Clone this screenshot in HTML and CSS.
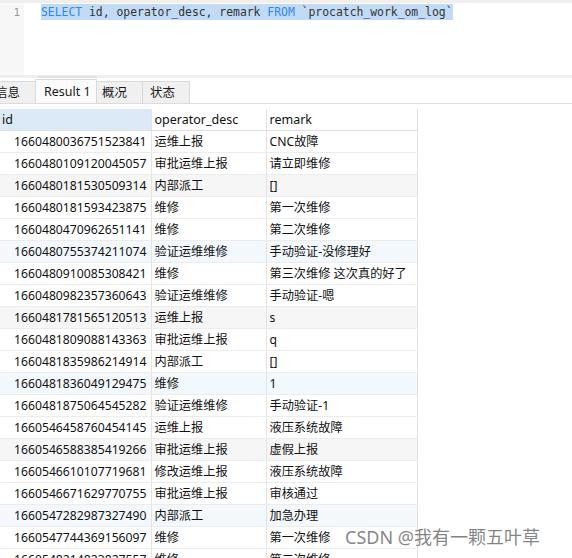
FILE: index.html
```html
<!DOCTYPE html>
<html>
<head>
<meta charset="utf-8">
<link rel="stylesheet" href="styles.css">
</head>
<body>
<div class="editor">
  <div class="gutter"><span class="ln">1</span></div>
  <div class="code"><span class="sel"><span class="kw">SELECT</span> id, operator_desc, remark <span class="kw">FROM</span> `procatch_work_om_log`</span></div>
</div>
<div class="splitter"><div class="thumb"></div></div>
<div class="tabs">
  <div class="tab first">信息</div>
  <div class="tab active">Result 1</div>
  <div class="tab t3">概况</div>
  <div class="tab t4">状态</div>
</div>
<div class="grid-wrap">
<table class="grid">
  <colgroup><col class="c1"><col class="c2"><col class="c3"></colgroup>
  <thead>
    <tr><th class="sorted">id</th><th>operator_desc</th><th>remark</th></tr>
  </thead>
  <tbody>
    <tr><td class="num">1660480036751523841</td><td>运维上报</td><td>CNC故障</td></tr>
    <tr><td class="num">1660480109120045057</td><td>审批运维上报</td><td>请立即维修</td></tr>
    <tr class="alt-g"><td class="num">1660480181530509314</td><td>内部派工</td><td>[]</td></tr>
    <tr><td class="num">1660480181593423875</td><td>维修</td><td>第一次维修</td></tr>
    <tr><td class="num">1660480470962651141</td><td>维修</td><td>第二次维修</td></tr>
    <tr class="alt-b"><td class="num">1660480755374211074</td><td>验证运维维修</td><td>手动验证-没修理好</td></tr>
    <tr><td class="num">1660480910085308421</td><td>维修</td><td>第三次维修 这次真的好了</td></tr>
    <tr><td class="num">1660480982357360643</td><td>验证运维维修</td><td>手动验证-嗯</td></tr>
    <tr class="alt-g"><td class="num">1660481781565120513</td><td>运维上报</td><td>s</td></tr>
    <tr><td class="num">1660481809088143363</td><td>审批运维上报</td><td>q</td></tr>
    <tr><td class="num">1660481835986214914</td><td>内部派工</td><td>[]</td></tr>
    <tr class="alt-b"><td class="num">1660481836049129475</td><td>维修</td><td>1</td></tr>
    <tr><td class="num">1660481875064545282</td><td>验证运维维修</td><td>手动验证-1</td></tr>
    <tr><td class="num">1660546458760454145</td><td>运维上报</td><td>液压系统故障</td></tr>
    <tr class="alt-g"><td class="num">1660546588385419266</td><td>审批运维上报</td><td>虚假上报</td></tr>
    <tr><td class="num">1660546610107719681</td><td>修改运维上报</td><td>液压系统故障</td></tr>
    <tr><td class="num">1660546671629770755</td><td>审批运维上报</td><td>审核通过</td></tr>
    <tr class="alt-b"><td class="num">1660547282987327490</td><td>内部派工</td><td>加急办理</td></tr>
    <tr><td class="num">1660547744369156097</td><td>维修</td><td>第一次维修</td></tr>
    <tr><td class="num">1660548214823827557</td><td>维修</td><td>第二次维修</td></tr>
  </tbody>
</table>
</div>
<div class="watermark">CSDN @我有一颗五叶草</div>
</body>
</html>
```
FILE: styles.css
```css
html, body {
  margin: 0;
  padding: 0;
  background: #ffffff;
  overflow: hidden;
}
body {
  width: 572px;
  height: 558px;
  position: relative;
  font-family: "Noto Sans", "Noto Sans CJK SC", sans-serif;
  font-size: 12px;
  color: #111111;
}
.editor {
  display: flex;
  height: 72px;
  border-top: 3px solid #efefef;
  background: #fff;
}
.gutter {
  width: 24px;
  background: #f7f7f7;
  display: flex;
  justify-content: flex-end;
  padding-top: 2px;
  box-sizing: border-box;
}
.ln {
  font-family: "DejaVu Sans Mono", monospace;
  font-size: 11px;
  color: #999999;
  line-height: 16px;
  padding-right: 4px;
}
.code {
  padding-left: 17px;
  padding-top: 1px;
  font-family: "DejaVu Sans Mono", "Liberation Mono", monospace;
  font-size: 11.4px;
  line-height: 16px;
  color: #333333;
  white-space: pre;
}
.sel {
  background: #c2dbf5;
  display: inline-block;
  height: 16px;
}
.kw {
  color: #2f86f0;
}
.splitter {
  height: 3px;
  background: #efefef;
  position: relative;
}
.thumb {
  position: absolute;
  left: 37px;
  top: 1px;
  width: 60px;
  height: 2px;
  background: #e2e2e2;
}
.tabs {
  display: flex;
  align-items: flex-end;
  height: 25px;
  border-bottom: 1px solid #dcdcdc;
}
.tab {
  flex: 0 0 auto;
  white-space: nowrap;
  height: 22px;
  line-height: 21px;
  box-sizing: border-box;
  background: #f0f0f0;
  border: 1px solid #d9d9d9;
  border-bottom: none;
  margin-left: -1px;
  font-size: 12.5px;
  color: #1a1a1a;
}
.tab.first {
  margin-left: -18px;
  width: 54px;
  padding-left: 12px;
}
.tab.active {
  background: #fbfbfb;
  height: 24px;
  line-height: 23px;
  width: 62px;
  padding-left: 8px;
  position: relative;
  z-index: 1;
}
.tab.t3 {
  width: 47px;
  padding-left: 5px;
}
.tab.t4 {
  width: 48px;
  padding-left: 7px;
}
.grid-wrap {
  padding-top: 5px;
}
.grid {
  border-collapse: collapse;
  table-layout: fixed;
  width: 417px;
}
.c1 { width: 151px; }
.c2 { width: 115px; }
.c3 { width: 151px; }
.grid th, .grid td {
  height: 22px;
  padding: 0 3px;
  box-sizing: border-box;
  border-right: 1px solid #e3e3e3;
  border-bottom: 1px solid #ececec;
  white-space: nowrap;
  overflow: hidden;
  text-align: left;
  font-weight: normal;
  line-height: 21px;
  font-size: 12.2px;
}
.grid th {
  height: 21px;
  font-size: 12.5px;
  border-bottom: 1px solid #e0e0e0;
}
.grid th.sorted {
  background: #dceaf7;
  padding-left: 2px;
}
.grid td.num {
  text-align: right;
  padding-right: 4px;
}
.grid tr.alt-g td {
  background: #f6f6f6;
}
.grid tr.alt-b td {
  background: #f3f8fd;
}
.watermark {
  position: absolute;
  left: 345px;
  top: 525px;
  font-size: 18px;
  line-height: 24px;
  color: rgba(110, 110, 110, 0.85);
  text-shadow: 0 0 1px #ffffff;
  white-space: nowrap;
}
```
